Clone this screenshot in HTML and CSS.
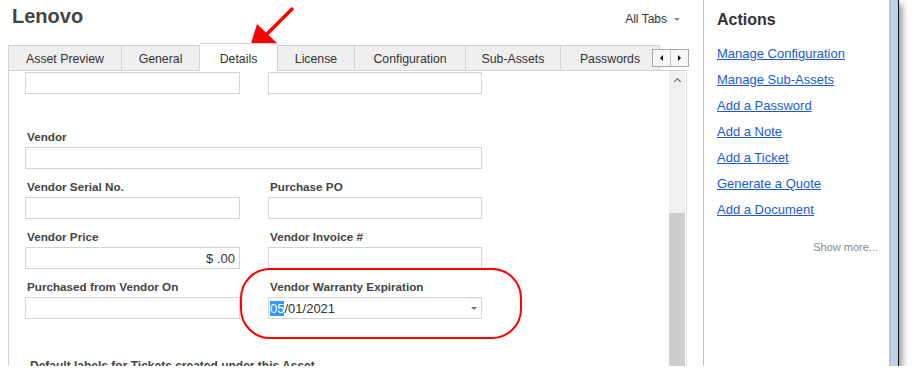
FILE: index.html
```html
<!DOCTYPE html>
<html lang="en">
<head>
    <meta charset="UTF-8">
    <title>Lenovo - Details</title>
    <link rel="stylesheet" href="styles.css">
</head>
<body>

<div class="window">
    <div class="main">
        <div class="detail">
            <div class="header">
                <h1 class="title">Lenovo</h1>
                <div class="all-tabs">All Tabs <span class="caret"></span></div>
            </div>
            <div class="tabs">
                <div class="tab tab-preview">Asset Preview</div>
                <div class="tab tab-general">General</div>
                <div class="tab tab-details active">Details</div>
                <div class="tab tab-license">License</div>
                <div class="tab tab-config">Configuration</div>
                <div class="tab tab-sub">Sub-Assets</div>
                <div class="tab tab-passwords">Passwords</div>
                <div class="tab-scroll">
                    <span class="scroll-btn"><span class="tri-left"></span></span>
                    <span class="scroll-btn"><span class="tri-right"></span></span>
                </div>
            </div>
            <div class="panel">
                <form class="form" action="#">
                    <div class="row cut">
                        <div class="field"><input type="text"></div>
                        <div class="field"><input type="text"></div>
                    </div>
                    <div class="row">
                        <div class="field wide">
                            <label>Vendor</label>
                            <input type="text">
                        </div>
                    </div>
                    <div class="row">
                        <div class="field">
                            <label>Vendor Serial No.</label>
                            <input type="text">
                        </div>
                        <div class="field">
                            <label>Purchase PO</label>
                            <input type="text">
                        </div>
                    </div>
                    <div class="row">
                        <div class="field">
                            <label>Vendor Price</label>
                            <input type="text" class="money" value="$ .00">
                        </div>
                        <div class="field">
                            <label>Vendor Invoice #</label>
                            <input type="text">
                        </div>
                    </div>
                    <div class="row">
                        <div class="field">
                            <label>Purchased from Vendor On</label>
                            <input type="text">
                        </div>
                        <div class="field">
                            <label>Vendor Warranty Expiration</label>
                            <div class="date-input">
                                <span class="date-text"><span class="sel">05</span>/01/2021</span>
                                <span class="dd-btn"><span class="caret dark"></span></span>
                            </div>
                        </div>
                    </div>
                    <div class="section-label">Default labels for Tickets created under this Asset</div>
                </form>
                <div class="scrollbar">
                    <div class="sb-up"><span class="chevron"></span></div>
                    <div class="sb-track"></div>
                    <div class="sb-thumb"></div>
                </div>
            </div>
        </div>
    </div>

    <div class="actions">
        <h3>Actions</h3>
        <a href="#">Manage Configuration</a>
        <a href="#">Manage Sub-Assets</a>
        <a href="#">Add a Password</a>
        <a href="#">Add a Note</a>
        <a href="#">Add a Ticket</a>
        <a href="#">Generate a Quote</a>
        <a href="#">Add a Document</a>
        <div class="show-more">Show more...</div>
    </div>
    <div class="frame"></div>

    <!-- screenshot annotations -->
    <div class="callout"></div>
    <svg class="arrow" width="300" height="60" viewBox="0 0 300 60">
        <line x1="292" y1="9" x2="264" y2="37" stroke="#f00" stroke-width="3.5" stroke-linecap="round"/>
        <polygon points="248,53 257,24 277,43" fill="#f00"/>
    </svg>
</div>

</body>
</html>
```

FILE: styles.css
```css
body {
    margin: 0;
    font-family: "Liberation Sans", Arial, sans-serif;
    background-color: #fff;
}
.window {
    position: relative;
    display: flex;
    width: 899px;
    height: 366px;
    background-color: #fff;
    box-shadow: 3px 4px 7px rgba(0, 0, 0, 0.45);
}
.main {
    width: 703px;
    flex: none;
}
.detail {
    margin-left: 8px;
    width: 679px;
}
.header {
    display: flex;
    justify-content: space-between;
    align-items: flex-start;
    height: 43px;
    padding: 0 7px 0 4px;
    box-sizing: border-box;
}
.title {
    margin: 5px 0 0;
    font-size: 20px;
    line-height: 23px;
    font-weight: bold;
    color: #444;
}
.all-tabs {
    display: flex;
    align-items: center;
    gap: 7px;
    margin-top: 12px;
    font-size: 12px;
    line-height: 14px;
    color: #333;
}
.caret {
    width: 0;
    height: 0;
    border-left: 3.5px solid transparent;
    border-right: 3.5px solid transparent;
    border-top: 3.5px solid #8a8a8a;
}
.caret.dark {
    border-top-color: #777;
}

/* tabs */
.tabs {
    position: relative;
    display: flex;
    align-items: flex-end;
    height: 27px;
}
.tab {
    flex: none;
    display: flex;
    align-items: center;
    justify-content: center;
    height: 25px;
    padding-top: 2px;
    box-sizing: border-box;
    border-top: 1px solid #d3d3d3;
    border-right: 1px solid #d3d3d3;
    background-color: #efefef;
    font-size: 12.3px;
    color: #333;
}
.tab-preview {
    width: 114px;
    border-left: 1px solid #d3d3d3;
}
.tab-general { width: 78px; }
.tab-details { width: 78px; }
.tab-license { width: 77px; }
.tab-config { width: 111px; }
.tab-sub { width: 95px; }
.tab-passwords { width: 99px; }
.tab.active {
    position: relative;
    z-index: 1;
    height: 28px;
    margin-bottom: -1px;
    padding-top: 3px;
    background-color: #fff;
}
.tab-scroll {
    position: absolute;
    left: 644px;
    top: 6px;
    display: flex;
    height: 18px;
    border: 1px solid #a8a8a8;
    box-sizing: border-box;
    background-color: #f6f6f6;
}
.scroll-btn {
    display: flex;
    align-items: center;
    justify-content: center;
    width: 17px;
}
.scroll-btn + .scroll-btn {
    border-left: 1px solid #c4c4c4;
}
.tri-left {
    border-top: 3px solid transparent;
    border-bottom: 3px solid transparent;
    border-right: 3px solid #111;
}
.tri-right {
    border-top: 3px solid transparent;
    border-bottom: 3px solid transparent;
    border-left: 3px solid #111;
}

/* panel */
.panel {
    display: flex;
    height: 296px;
    box-sizing: border-box;
    border: 1px solid #d3d3d3;
    border-right-color: #e0e0e0;
    border-bottom: none;
}
.form {
    flex: 1;
    margin: 0;
    padding: 1px 0 0 16px;
    overflow: hidden;
}
.row {
    display: flex;
    gap: 28px;
    margin-bottom: 11px;
}
.row.cut {
    margin-bottom: 36px;
}
.field {
    width: 215px;
}
.field + .field {
    width: 214px;
}
.field.wide {
    width: 457px;
}
.field label {
    display: block;
    margin-bottom: 3px;
    padding-left: 2px;
    font-size: 11.7px;
    line-height: 14px;
    font-weight: bold;
    color: #444;
}
.field input,
.date-input {
    display: block;
    width: 100%;
    height: 22px;
    margin: 0;
    padding: 0 4px;
    box-sizing: border-box;
    border: 1px solid #cdd5df;
    border-radius: 0;
    font-family: "Liberation Sans", Arial, sans-serif;
    font-size: 13px;
    color: #333;
    background-color: #fff;
}
.field input.money {
    text-align: right;
}
.date-input {
    display: flex;
    align-items: center;
    padding: 0 0 0 1px;
}
.sel {
    background-color: #3399ff;
    color: #fff;
}
.dd-btn {
    display: flex;
    align-items: center;
    justify-content: center;
    width: 15px;
    height: 100%;
    margin-left: auto;
    box-sizing: border-box;
    border-top: 1px solid #e4ecf5;
}
.section-label {
    margin-top: 40px;
    padding-left: 5px;
    font-size: 12px;
    line-height: 14px;
    font-weight: bold;
    color: #444;
}
.scrollbar {
    display: flex;
    flex-direction: column;
    width: 16px;
    margin-right: 1px;
    background-color: #f0f0f0;
}
.sb-up {
    display: flex;
    justify-content: center;
    height: 22px;
    padding-top: 8px;
    box-sizing: border-box;
}
.chevron {
    width: 4px;
    height: 4px;
    border-left: 1.5px solid #606060;
    border-top: 1.5px solid #606060;
    transform: rotate(45deg);
}
.sb-track {
    height: 120px;
}
.sb-thumb {
    flex: 1;
    background-color: #cdcdcd;
}

/* actions */
.actions {
    flex: none;
    width: 188px;
    padding: 10px 11px 0 13px;
    box-sizing: border-box;
    border-left: 1px solid #c3c3c3;
    border-right: 2px solid #c3c3c3;
}
.actions h3 {
    margin: 0 0 11px;
    font-size: 16px;
    line-height: 20px;
    color: #333;
}
.actions a {
    display: block;
    font-size: 13px;
    line-height: 26px;
    color: #1a5ccf;
    text-decoration: underline;
}
.show-more {
    margin-top: 17px;
    text-align: right;
    font-size: 11px;
    line-height: 14px;
    color: #888;
}
.frame {
    flex: none;
    width: 7px;
    background-color: #b9d1ea;
    border-right: 1px solid #111;
}

/* annotations */
.callout {
    position: absolute;
    left: 240px;
    top: 268px;
    width: 282px;
    height: 71px;
    box-sizing: border-box;
    border: 2px solid #f00;
    border-radius: 30px;
}
.arrow {
    position: absolute;
    left: 0;
    top: 0;
}
```
